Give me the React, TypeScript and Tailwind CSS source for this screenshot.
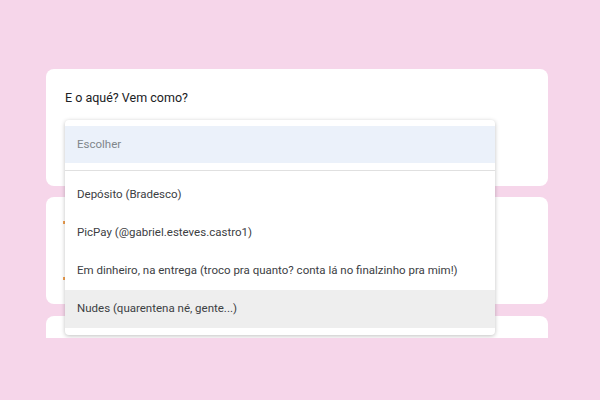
const options = [
  "Depósito (Bradesco)",
  "PicPay (@gabriel.esteves.castro1)",
  "Em dinheiro, na entrega (troco pra quanto? conta lá no finalzinho pra mim!)",
  "Nudes (quarentena né, gente...)",
];

export default function App() {
  return (
    <div className="w-[600px] h-[400px] bg-[#f6d6ea] font-['Roboto',sans-serif]">
      <div className="w-[600px] h-[338px] overflow-hidden flex flex-col gap-[11px] pt-[69px] pl-[46px] pr-[52px]">
        {/* Question card */}
        <div className="relative h-[117px] shrink-0 rounded-lg bg-white">
          <p className="pl-[19px] pt-[20px] text-[12.5px] text-[#202124]">
            E o aqué? Vem como?
          </p>

          {/* Open dropdown */}
          <div className="absolute left-[19px] top-[51px] z-10 w-[430px] rounded bg-white pt-[6px] pb-[7px] shadow-[0_1px_4px_rgba(0,0,0,0.25)]">
            <div className="h-[37px] flex items-center px-3 bg-[#ebf1fa] text-[11.5px] text-[#80868b]">
              Escolher
            </div>
            <div className="mt-[7px] mb-[5px] h-px bg-[#e0e0e0]" />
            {options.map((opt, i) => (
              <div
                key={opt}
                className={`h-[38px] flex items-center px-3 text-[11.5px] text-[#3c4043] ${
                  i === options.length - 1 ? "bg-[#eeeeee]" : ""
                }`}
              >
                {opt}
              </div>
            ))}
          </div>
        </div>

        <div className="h-[107px] shrink-0 rounded-lg bg-white flex flex-col gap-[53px] pl-[17px] pt-[24px]">
          <span className="h-[3px] w-[2px] bg-[#f0a050]" />
          <span className="h-[3px] w-[2px] bg-[#f0a050]" />
        </div>
        <div className="h-[60px] shrink-0 rounded-lg bg-white mt-px" />
      </div>
    </div>
  );
}
